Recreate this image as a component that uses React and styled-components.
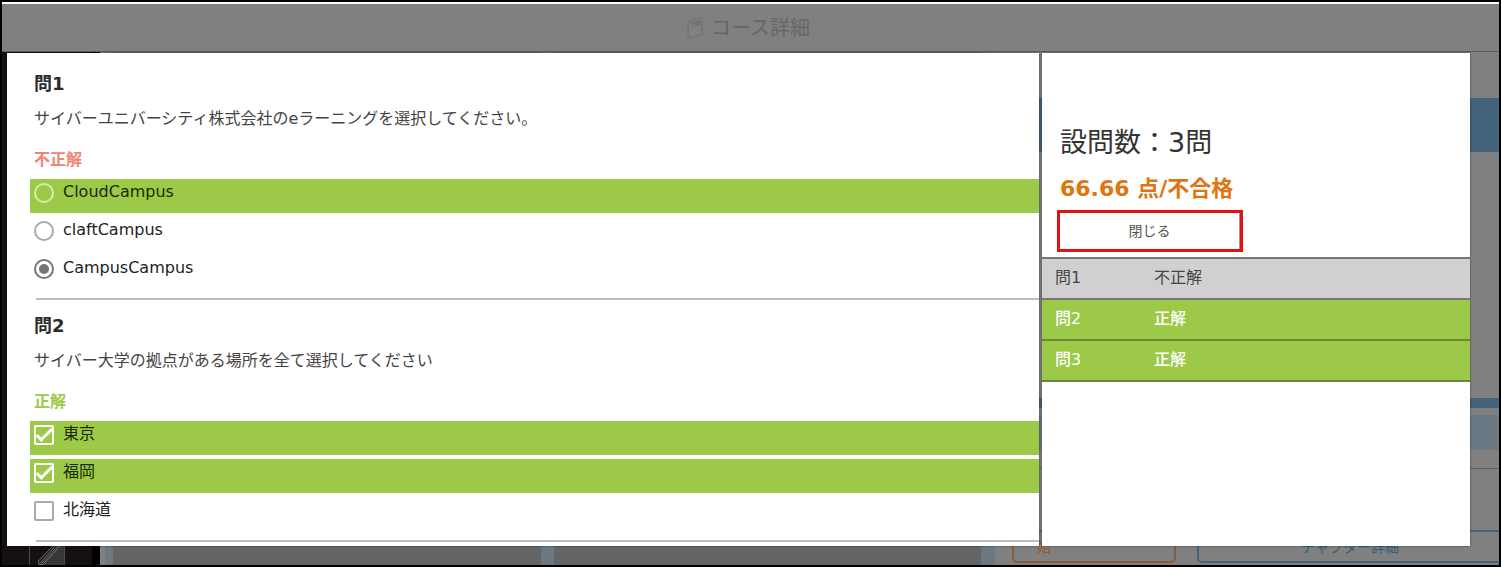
import React from "react";
import styled, { createGlobalStyle, css } from "styled-components";

const Global = createGlobalStyle`
  *, *::before, *::after { box-sizing: border-box; }
  body {
    margin: 0;
    background: #000;
    color: #333;
    font: 16px/24px "DejaVu Sans", "Noto Sans CJK JP", sans-serif;
  }
  h1, h2, p { margin: 0; }
`;

const Frame = styled.div`
  display: grid;
  grid-template-columns: minmax(0, 1fr);
  min-height: 100vh;
  border: 2px solid #000;
  overflow: hidden;
  > * { grid-area: 1 / 1; }
`;

const Page = styled.div`
  display: flex;
  flex-direction: column;
  min-width: 0;
  border-top: 2px solid #fff;
  background: #808080;
`;

const Header = styled.header`
  display: flex;
  align-items: center;
  justify-content: center;
  gap: 8px;
  height: 48px;
  padding: 1px 4px 0 0;
  border-bottom: 1px solid #5c5c5c;
  color: #666;
  h1 { font-size: 20px; line-height: 24px; font-weight: 400; }
`;

const Columns = styled.div`
  flex: 1;
  display: flex;
  min-width: 0;
`;

const SideNav = styled.nav`
  display: flex;
  flex: 0 0 98px;
  align-items: flex-end;
  padding-left: 27px;
  background: #151111;
  border-right: 8px solid #000;
`;

const Courses = styled.section`
  display: grid;
  grid-template-columns: 1fr 1fr;
  gap: 13px;
  flex: 1;
  margin-left: 5px;
  padding: 0 14px 0 8px;
  background: #6a7984;
`;

const Course = styled.div`
  background: #656565;
`;

const Detail = styled.section`
  display: flex;
  flex-direction: column;
  flex: 0 0 504px;
`;

const Band = styled.div`
  height: ${(p) => p.$h}px;
  margin-top: ${(p) => p.$gap}px;
  background: ${(p) => p.$color};
`;

const Actions = styled.div`
  display: flex;
  gap: 21px;
  margin: auto -4px 2px 17px;
`;

const Action = styled.button`
  flex: ${(p) => (p.$wide ? "1" : "0 0 164px")};
  height: 33px;
  padding: 0 23px;
  border: 2px solid ${(p) => (p.$wide ? "#426379" : "#875c3c")};
  border-radius: 5px;
  background: none;
  color: ${(p) => (p.$wide ? "#335d78" : "#985620")};
  font: 14px/20px "DejaVu Sans", "Noto Sans CJK JP", sans-serif;
  text-align: ${(p) => (p.$wide ? "center" : "left")};
`;

const Dialog = styled.div`
  z-index: 1;
  display: flex;
  gap: 3px;
  min-width: 0;
  margin: 51px 29px 19px 5px;
`;

const panel = css`
  background: #fff;
  box-shadow: 0 0 2px rgba(0, 0, 0, 0.5);
`;

const Questions = styled.main`
  ${panel}
  flex: 1;
  min-width: 0;
  padding: 5px 0 4px 23px;
`;

const Question = styled.fieldset`
  margin: 0;
  padding: 14px 0 0;
  border: 0;
`;

const QuestionTitle = styled.h2`
  padding-left: 4px;
  font-size: 18px;
  line-height: 24px;
  color: #2b2b2b;
`;

const QuestionText = styled.p`
  margin: 11px 0 17px;
  padding-left: 4px;
  color: #444;
`;

const Result = styled.p`
  padding-left: 4px;
  margin-bottom: 7px;
  font-weight: 700;
  color: ${(p) => (p.$correct ? "#9cca48" : "#ee8475")};
`;

const Choices = styled.div`
  display: grid;
  gap: 4px;
`;

const Choice = styled.label`
  display: flex;
  align-items: flex-start;
  gap: 9px;
  height: 34px;
  padding: 1px 0 0 4px;
  color: ${(p) => (p.$answer ? "#1d2900" : "#222")};
  background: ${(p) => (p.$answer ? "#9cca48" : "transparent")};
`;

const Mark = styled.input`
  appearance: none;
  flex: none;
  display: grid;
  place-items: center;
  width: 20px;
  height: 20px;
  margin: 3px 0 0;
  border: 2px solid ${(p) => (p.$answer ? "#fff" : "#aaa")};
  border-radius: 2px;
  &[type="radio"] {
    border-radius: 50%;
    border-color: ${(p) => (p.$answer ? "#d4edaa" : "#aaa")};
  }
  &[type="radio"]:checked { border-color: #757575; }
  &[type="radio"]:checked::before {
    content: "";
    width: 10px;
    height: 10px;
    border-radius: 50%;
    background: #757575;
  }
  &[type="checkbox"]:checked::before {
    content: "";
    width: 17px;
    height: 8px;
    margin-top: -4px;
    border: solid #fff;
    border-width: 0 0 3px 3px;
    rotate: -45deg;
  }
`;

const Rule = styled.hr`
  height: 2px;
  margin: 9px 0 0 6px;
  border: 0;
  background: #bdbdbd;
`;

const Summary = styled.aside`
  ${panel}
  flex: 0 0 428px;
`;

const Count = styled.p`
  padding: 74px 18px 0;
  font-size: 27px;
  line-height: 32px;
`;

const Score = styled.p`
  padding: 16px 18px 0;
  font-size: 22px;
  line-height: 28px;
  font-weight: 700;
  color: #df750f;
`;

const CloseFrame = styled.div`
  display: flex;
  width: 186px;
  height: 42px;
  margin: 7px 0 5px 15px;
  border: 3px solid #e60f12;
`;

const Close = styled.button`
  flex: 1;
  padding: 0;
  border: 0;
  border-right: 1px solid #999;
  background: #fff;
  color: #555;
  font: 14px/20px "DejaVu Sans", "Noto Sans CJK JP", sans-serif;
`;

const Results = styled.table`
  width: 100%;
  border-collapse: collapse;
  table-layout: fixed;
`;

const ResultRow = styled.tr`
  height: 41px;
  border: solid ${(p) => (p.$correct ? "#6f833f" : "#777")};
  border-width: 2px 0;
  background: ${(p) => (p.$correct ? "#9cca48" : "#d0d0d0")};
  color: ${(p) => (p.$correct ? "#fff" : "#444")};
  th, td {
    padding: 0 0 1px 13px;
    text-align: left;
    font-weight: ${(p) => (p.$correct ? 500 : 400)};
  }
  th { width: 99px; }
`;

const questions = [
  {
    title: "問1",
    text: "サイバーユニバーシティ株式会社のeラーニングを選択してください。",
    correct: false,
    type: "radio",
    choices: [
      { label: "CloudCampus", answer: true },
      { label: "claftCampus" },
      { label: "CampusCampus", picked: true },
    ],
  },
  {
    title: "問2",
    text: "サイバー大学の拠点がある場所を全て選択してください",
    correct: true,
    type: "checkbox",
    choices: [
      { label: "東京", answer: true, picked: true },
      { label: "福岡", answer: true, picked: true },
      { label: "北海道" },
    ],
  },
];

const results = [
  ["問1", false],
  ["問2", true],
  ["問3", true],
];

const BookIcon = () => (
  <svg width="16" height="22" viewBox="0 0 16 22" fill="none" stroke="#707070" strokeWidth="1.2" strokeLinejoin="round">
    <path d="M1 5.5 11 4 15 5.500v12L4 21 1 19.500Z" />
    <path d="M1 5.500 5 2 14.500 1.500 15 5.500" />
    <path d="M5 7l7-2v2l-4 1.500" strokeWidth="1.800" />
  </svg>
);

const PenIcon = () => (
  <svg width="36" height="19" viewBox="0 0 36 19" fill="none" stroke="#777" strokeWidth="1">
    <path d="M12 19 30 0h6v19z" fill="#383737" stroke="none" />
    <path d="M.5 0v19M35.500 0v19" stroke="#4c4a4a" />
    <path d="M9.500 15 24 0M14 18.500 31 0M11 17 26.500 0M12.500 17.500 29 0M9.500 15 10 18.500h4" />
  </svg>
);

export default function App() {
  return (
    <>
      <Global />
      <Frame>
        <Page>
          <Header>
            <BookIcon />
            <h1>コース詳細</h1>
          </Header>
          <Columns>
            <SideNav>
              <PenIcon />
            </SideNav>
            <Courses>
              <Course />
              <Course />
            </Courses>
            <Detail>
              <Band $gap={46} $h={54} $color="#426379" />
              <Band $gap={246} $h={10} $color="#426379" />
              <Band $gap={7} $h={35} $color="#6a7984" />
              <Band $gap={18} $h={1} $color="#5f5f5f" />
              <Actions>
                <Action type="button">始</Action>
                <Action type="button" $wide>チャプター詳細</Action>
              </Actions>
            </Detail>
          </Columns>
        </Page>
        <Dialog role="dialog">
          <Questions>
            {questions.map((q) => (
              <Question key={q.title}>
                <QuestionTitle>{q.title}</QuestionTitle>
                <QuestionText>{q.text}</QuestionText>
                <Result $correct={q.correct}>{q.correct ? "正解" : "不正解"}</Result>
                <Choices>
                  {q.choices.map((c) => (
                    <Choice key={c.label} $answer={c.answer}>
                      <Mark type={q.type} name={q.title} defaultChecked={c.picked} $answer={c.answer} />
                      {c.label}
                    </Choice>
                  ))}
                </Choices>
                <Rule />
              </Question>
            ))}
          </Questions>
          <Summary>
            <Count>設問数：3問</Count>
            <Score>66.66 点/不合格</Score>
            <CloseFrame>
              <Close type="button">閉じる</Close>
            </CloseFrame>
            <Results>
              <tbody>
                {results.map(([name, correct]) => (
                  <ResultRow key={name} $correct={correct}>
                    <th scope="row">{name}</th>
                    <td>{correct ? "正解" : "不正解"}</td>
                  </ResultRow>
                ))}
              </tbody>
            </Results>
          </Summary>
        </Dialog>
      </Frame>
    </>
  );
}
